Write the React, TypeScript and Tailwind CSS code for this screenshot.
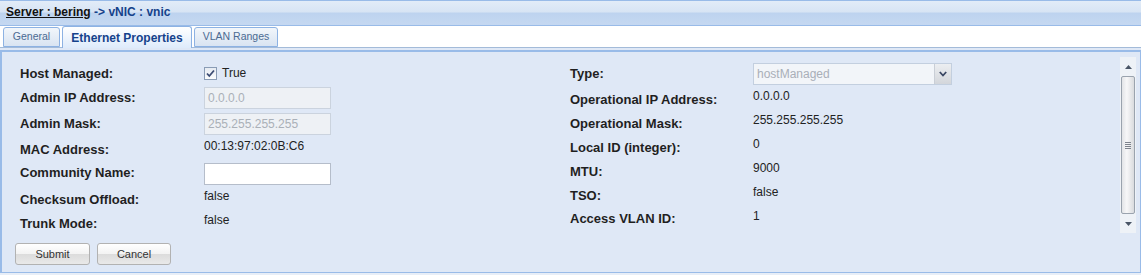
import React from 'react';

const font = { fontFamily: '"Liberation Sans", Arial, sans-serif' };

type RowProps = {
  label: string;
  h: string;
  lpt: string;
  lw: string;
  children: React.ReactNode;
};

const Row = ({ label, h, lpt, lw, children }: RowProps) => (
  <div className={`flex items-start ${h}`}>
    <div className={`${lw} ${lpt} shrink-0 text-[13px] leading-[15px] font-bold text-[#1f1f1f]`}>{label}</div>
    <div className="flex-1">{children}</div>
  </div>
);

const Value = ({ text, pt }: { text: string; pt: string }) => (
  <div className={`${pt} text-[12px] leading-[14px] text-[#222]`}>{text}</div>
);

const DisabledInput = ({ value }: { value: string }) => (
  <div className="w-[127px] h-[22px] border border-[#cbd3de] bg-[#eef1f5] px-[3px] text-[12px] leading-[20px] text-[#aab0b8]">
    {value}
  </div>
);

const CheckBox = () => (
  <div className="w-[13px] h-[13px] border border-[#8a9cb5] bg-[linear-gradient(to_bottom,#e6ebf2,#fbfcfd)] flex items-center justify-center">
    <svg width="9" height="9" viewBox="0 0 9 9">
      <path d="M1 4.5 L3.3 7 L8 1.5" fill="none" stroke="#3b4b73" strokeWidth="1.8" />
    </svg>
  </div>
);

const Tab = ({ label, active, w }: { label: string; active?: boolean; w: string }) => (
  <div
    className={`${w} flex items-center justify-center rounded-t-[3px] border border-[#8db2e3] ${
      active
        ? 'h-[22px] border-b-0 bg-[linear-gradient(to_bottom,#ffffff,#deebfb)] text-[12px] font-bold text-[#15428b] relative top-[1px]'
        : 'h-[20px] bg-[linear-gradient(to_bottom,#f2f6fb,#d9e4f2)] text-[10.5px] text-[#4b6a92]'
    }`}
  >
    {label}
  </div>
);

const Button = ({ label, w }: { label: string; w: string }) => (
  <div
    className={`${w} h-[22px] rounded-[3px] border border-[#b2b2b2] bg-[linear-gradient(to_bottom,#ffffff_0%,#f3f3f3_50%,#dcdcdc_51%,#e9e9e9_100%)] flex items-center justify-center text-[11px] text-[#333]`}
  >
    {label}
  </div>
);

const Scrollbar = () => (
  <div className="w-[16px] h-[176px] mt-[5px] mr-[4px] bg-[#eef2f7] flex flex-col items-center">
    <div className="h-[19px] w-full flex items-center justify-center">
      <svg width="7" height="4" viewBox="0 0 7 4">
        <path d="M0 4 L3.5 0 L7 4 Z" fill="#4a5566" />
      </svg>
    </div>
    <div className="w-[14px] h-[138px] rounded-[2px] border border-[#9aa3ae] bg-[linear-gradient(to_right,#e2e4e7,#f7f7f8_40%,#d9dbde)] flex flex-col items-center justify-center gap-[1px]">
      <div className="w-[6px] h-[1px] bg-[#7d838c]" />
      <div className="w-[6px] h-[1px] bg-[#7d838c]" />
      <div className="w-[6px] h-[1px] bg-[#7d838c]" />
      <div className="w-[6px] h-[1px] bg-[#7d838c]" />
    </div>
    <div className="h-[19px] w-full flex items-center justify-center">
      <svg width="7" height="4" viewBox="0 0 7 4">
        <path d="M0 0 L3.5 4 L7 0 Z" fill="#4a5566" />
      </svg>
    </div>
  </div>
);

export default function App() {
  return (
    <div className="w-[1141px] h-[275px] bg-[#e8eef7] flex flex-col overflow-hidden" style={font}>
      {/* panel header */}
      <div className="h-[26px] shrink-0 border-t border-b border-[#99bbe8] bg-[linear-gradient(to_bottom,#e2ecf8_0%,#d7e4f4_46%,#bdd3ef_50%,#c5d8f1_100%)] pl-[6px] pt-[4px] text-[12px] leading-[15px] font-bold">
        <span className="text-[#111] underline">Server : bering</span>
        <span className="text-[#15428b]"> -&gt; vNIC : vnic</span>
      </div>

      {/* tab strip */}
      <div className="h-[22px] shrink-0 bg-white border-b border-[#a3bbd9] flex items-end gap-[2px] pl-[3px]">
        <Tab label="General" w="w-[57px]" />
        <Tab label="Ethernet Properties" w="w-[130px]" active />
        <Tab label="VLAN Ranges" w="w-[84px]" />
      </div>
      <div className="h-[2px] shrink-0 bg-[#dfe8f6]" />
      <div className="h-[2px] shrink-0 bg-[#99bbe8]" />

      {/* body */}
      <div className="h-[221px] shrink-0 bg-[#dfe8f6] border-l-2 border-r border-b border-[#99bbe8] flex">
        <div className="flex-1 flex flex-col pt-[10px]">
          <div className="flex pl-[18px]">
            {/* left column */}
            <div className="w-[550px] flex flex-col">
              <Row label="Host Managed:" h="h-[25px]" lpt="pt-[4px]" lw="w-[184px]">
                <div className="flex items-center gap-[5px] pt-[5px]">
                  <CheckBox />
                  <span className="text-[12px] leading-[13px] text-[#222]">True</span>
                </div>
              </Row>
              <Row label="Admin IP Address:" h="h-[26px]" lpt="pt-[3px]" lw="w-[184px]">
                <DisabledInput value="0.0.0.0" />
              </Row>
              <Row label="Admin Mask:" h="h-[25px]" lpt="pt-[3px]" lw="w-[184px]">
                <DisabledInput value="255.255.255.255" />
              </Row>
              <Row label="MAC Address:" h="h-[25px]" lpt="pt-[4px]" lw="w-[184px]">
                <Value text="00:13:97:02:0B:C6" pt="pt-[1px]" />
              </Row>
              <Row label="Community Name:" h="h-[25px]" lpt="pt-[2px]" lw="w-[184px]">
                <div className="w-[127px] h-[22px] border border-[#b5bdca] bg-white" />
              </Row>
              <Row label="Checksum Offload:" h="h-[24px]" lpt="pt-[4px]" lw="w-[184px]">
                <Value text="false" pt="pt-[1px]" />
              </Row>
              <Row label="Trunk Mode:" h="h-[24px]" lpt="pt-[4px]" lw="w-[184px]">
                <Value text="false" pt="pt-[1px]" />
              </Row>
            </div>

            {/* right column */}
            <div className="flex-1 flex flex-col">
              <Row label="Type:" h="h-[25px]" lpt="pt-[4px]" lw="w-[183px]">
                <div className="mt-[1px] w-[199px] h-[22px] border border-[#c3cfdf] bg-[#f2f5f9] flex">
                  <div className="flex-1 px-[3px] text-[12px] leading-[20px] text-[#a9afb8]">hostManaged</div>
                  <div className="w-[17px] h-full border-l border-[#c9ced6] bg-[linear-gradient(to_bottom,#eceef1,#d3d6db)] flex items-center justify-center">
                    <svg width="8" height="6" viewBox="0 0 8 6">
                      <path d="M0.8 1 L4 4.5 L7.2 1" fill="none" stroke="#3a4763" strokeWidth="1.8" />
                    </svg>
                  </div>
                </div>
              </Row>
              <Row label="Operational IP Address:" h="h-[24px]" lpt="pt-[5px]" lw="w-[183px]">
                <Value text="0.0.0.0" pt="pt-[2px]" />
              </Row>
              <Row label="Operational Mask:" h="h-[24px]" lpt="pt-[5px]" lw="w-[183px]">
                <Value text="255.255.255.255" pt="pt-[2px]" />
              </Row>
              <Row label="Local ID (integer):" h="h-[24px]" lpt="pt-[5px]" lw="w-[183px]">
                <Value text="0" pt="pt-[2px]" />
              </Row>
              <Row label="MTU:" h="h-[24px]" lpt="pt-[5px]" lw="w-[183px]">
                <Value text="9000" pt="pt-[2px]" />
              </Row>
              <Row label="TSO:" h="h-[24px]" lpt="pt-[5px]" lw="w-[183px]">
                <Value text="false" pt="pt-[2px]" />
              </Row>
              <Row label="Access VLAN ID:" h="h-[24px]" lpt="pt-[4px]" lw="w-[183px]">
                <Value text="1" pt="pt-[2px]" />
              </Row>
            </div>
          </div>

          <div className="flex gap-[7px] pl-[13px] mt-[7px]">
            <Button label="Submit" w="w-[75px]" />
            <Button label="Cancel" w="w-[74px]" />
          </div>
        </div>
        <Scrollbar />
      </div>
    </div>
  );
}
